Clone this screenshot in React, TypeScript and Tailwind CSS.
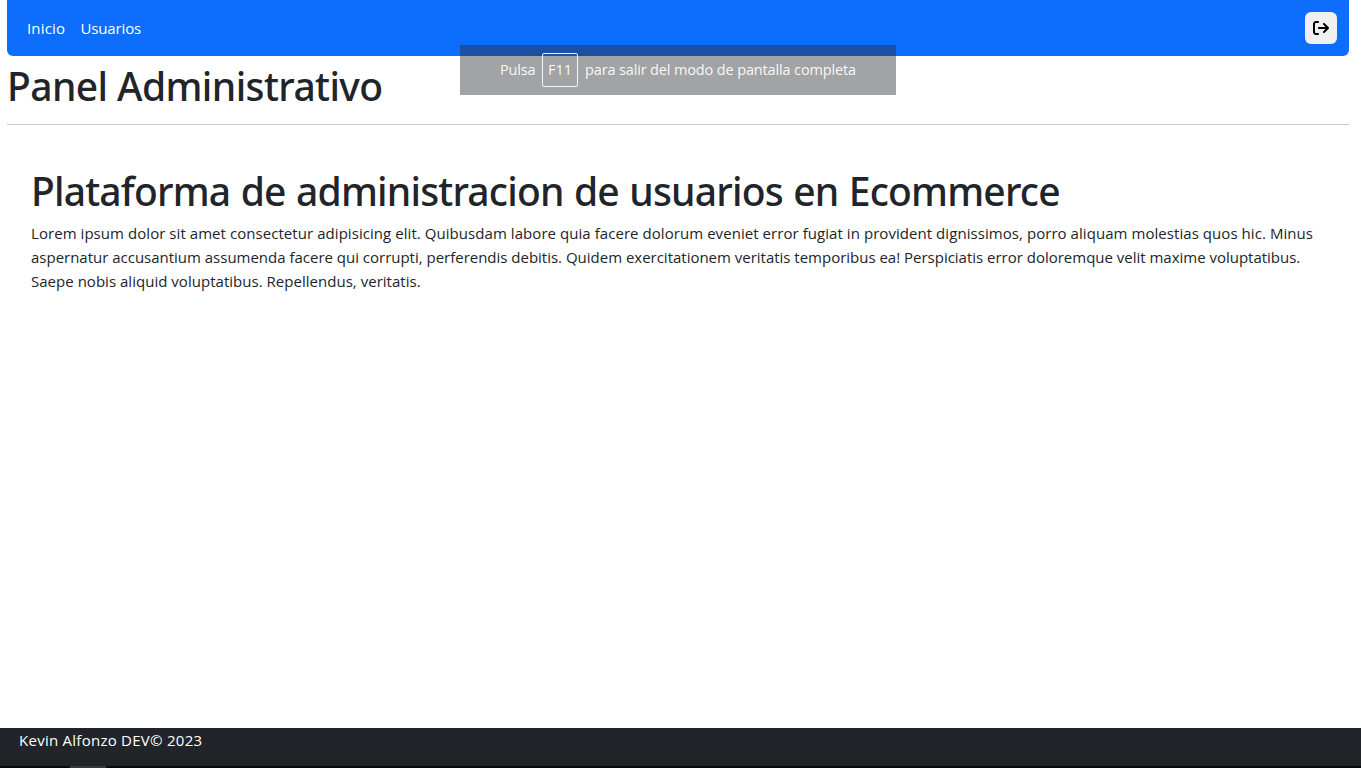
import React from "react";
import { FaArrowRightFromBracket } from "react-icons/fa6";

export default function App() {
  return (
    <div className="relative flex h-screen w-full flex-col overflow-hidden bg-white font-['Open_Sans','Noto_Sans',sans-serif] text-base text-[#212529]">
      <div className="flex grow flex-col pr-3 pl-[7px]">
        <nav className="flex h-14 items-center justify-between rounded-b-md bg-[#0d6efd] pr-3 pl-5 text-white">
          <div className="flex gap-4 text-[15px]">
            <a className="w-[37.5px] whitespace-nowrap tracking-[0.15px]">Inicio</a>
            <a className="whitespace-nowrap tracking-[-0.15px]">Usuarios</a>
          </div>
          <button className="flex size-8 items-center justify-center rounded-md bg-[#f0f0f0] text-black">
            <FaArrowRightFromBracket className="size-4" />
          </button>
        </nav>
        <h1 className="mt-1.5 font-['Noto_Sans'] text-[39px] leading-[48px] font-medium tracking-[-0.6px] whitespace-nowrap">Panel Administrativo</h1>
        <hr className="mt-3.5 border-t border-[#c8c9ca]" />
        <main className="px-6 pt-[42px]">
          <h1 className="font-['Noto_Sans'] text-[39px] leading-[48px] font-medium tracking-[-0.8px] [word-spacing:1px] whitespace-nowrap">Plataforma de administracion de usuarios en Ecommerce</h1>
          <div className="mt-1.5 text-[15px] leading-6 whitespace-nowrap">
            <p className="tracking-[0.058px]">Lorem ipsum dolor sit amet consectetur adipisicing elit. Quibusdam labore quia facere dolorum eveniet error fugiat in provident dignissimos, porro aliquam molestias quos hic. Minus</p>
            <p className="tracking-[-0.01px]">aspernatur accusantium assumenda facere qui corrupti, perferendis debitis. Quidem exercitationem veritatis temporibus ea! Perspiciatis error doloremque velit maxime voluptatibus.</p>
            <p className="tracking-[0.025px]">Saepe nobis aliquid voluptatibus. Repellendus, veritatis.</p>
          </div>
        </main>
      </div>
      <footer className="flex h-10 flex-col justify-between bg-[#212529] text-white">
        <p className="pl-[19px] text-[15px] leading-6 tracking-[0.26px]">Kevin Alfonzo DEV© 2023</p>
        <div className="h-0.5 bg-[#0a0a0b] pl-[70px]">
          <div className="h-0.5 w-9 bg-[#39393a]" />
        </div>
      </footer>
      <div className="absolute top-[45px] left-[460px] flex h-[50px] w-[436px] items-center bg-[#2b2d30]/44 pl-10 text-[14.5px] leading-6 whitespace-nowrap text-white/95">
        <span className="w-[42px] tracking-[-0.2px]">Pulsa</span>
        <span className="flex h-[34px] w-9 items-center justify-center rounded-xs border border-white/90">F11</span>
        <span className="ml-[7px] tracking-[-0.14px]">para salir del modo de pantalla completa</span>
      </div>
    </div>
  );
}
